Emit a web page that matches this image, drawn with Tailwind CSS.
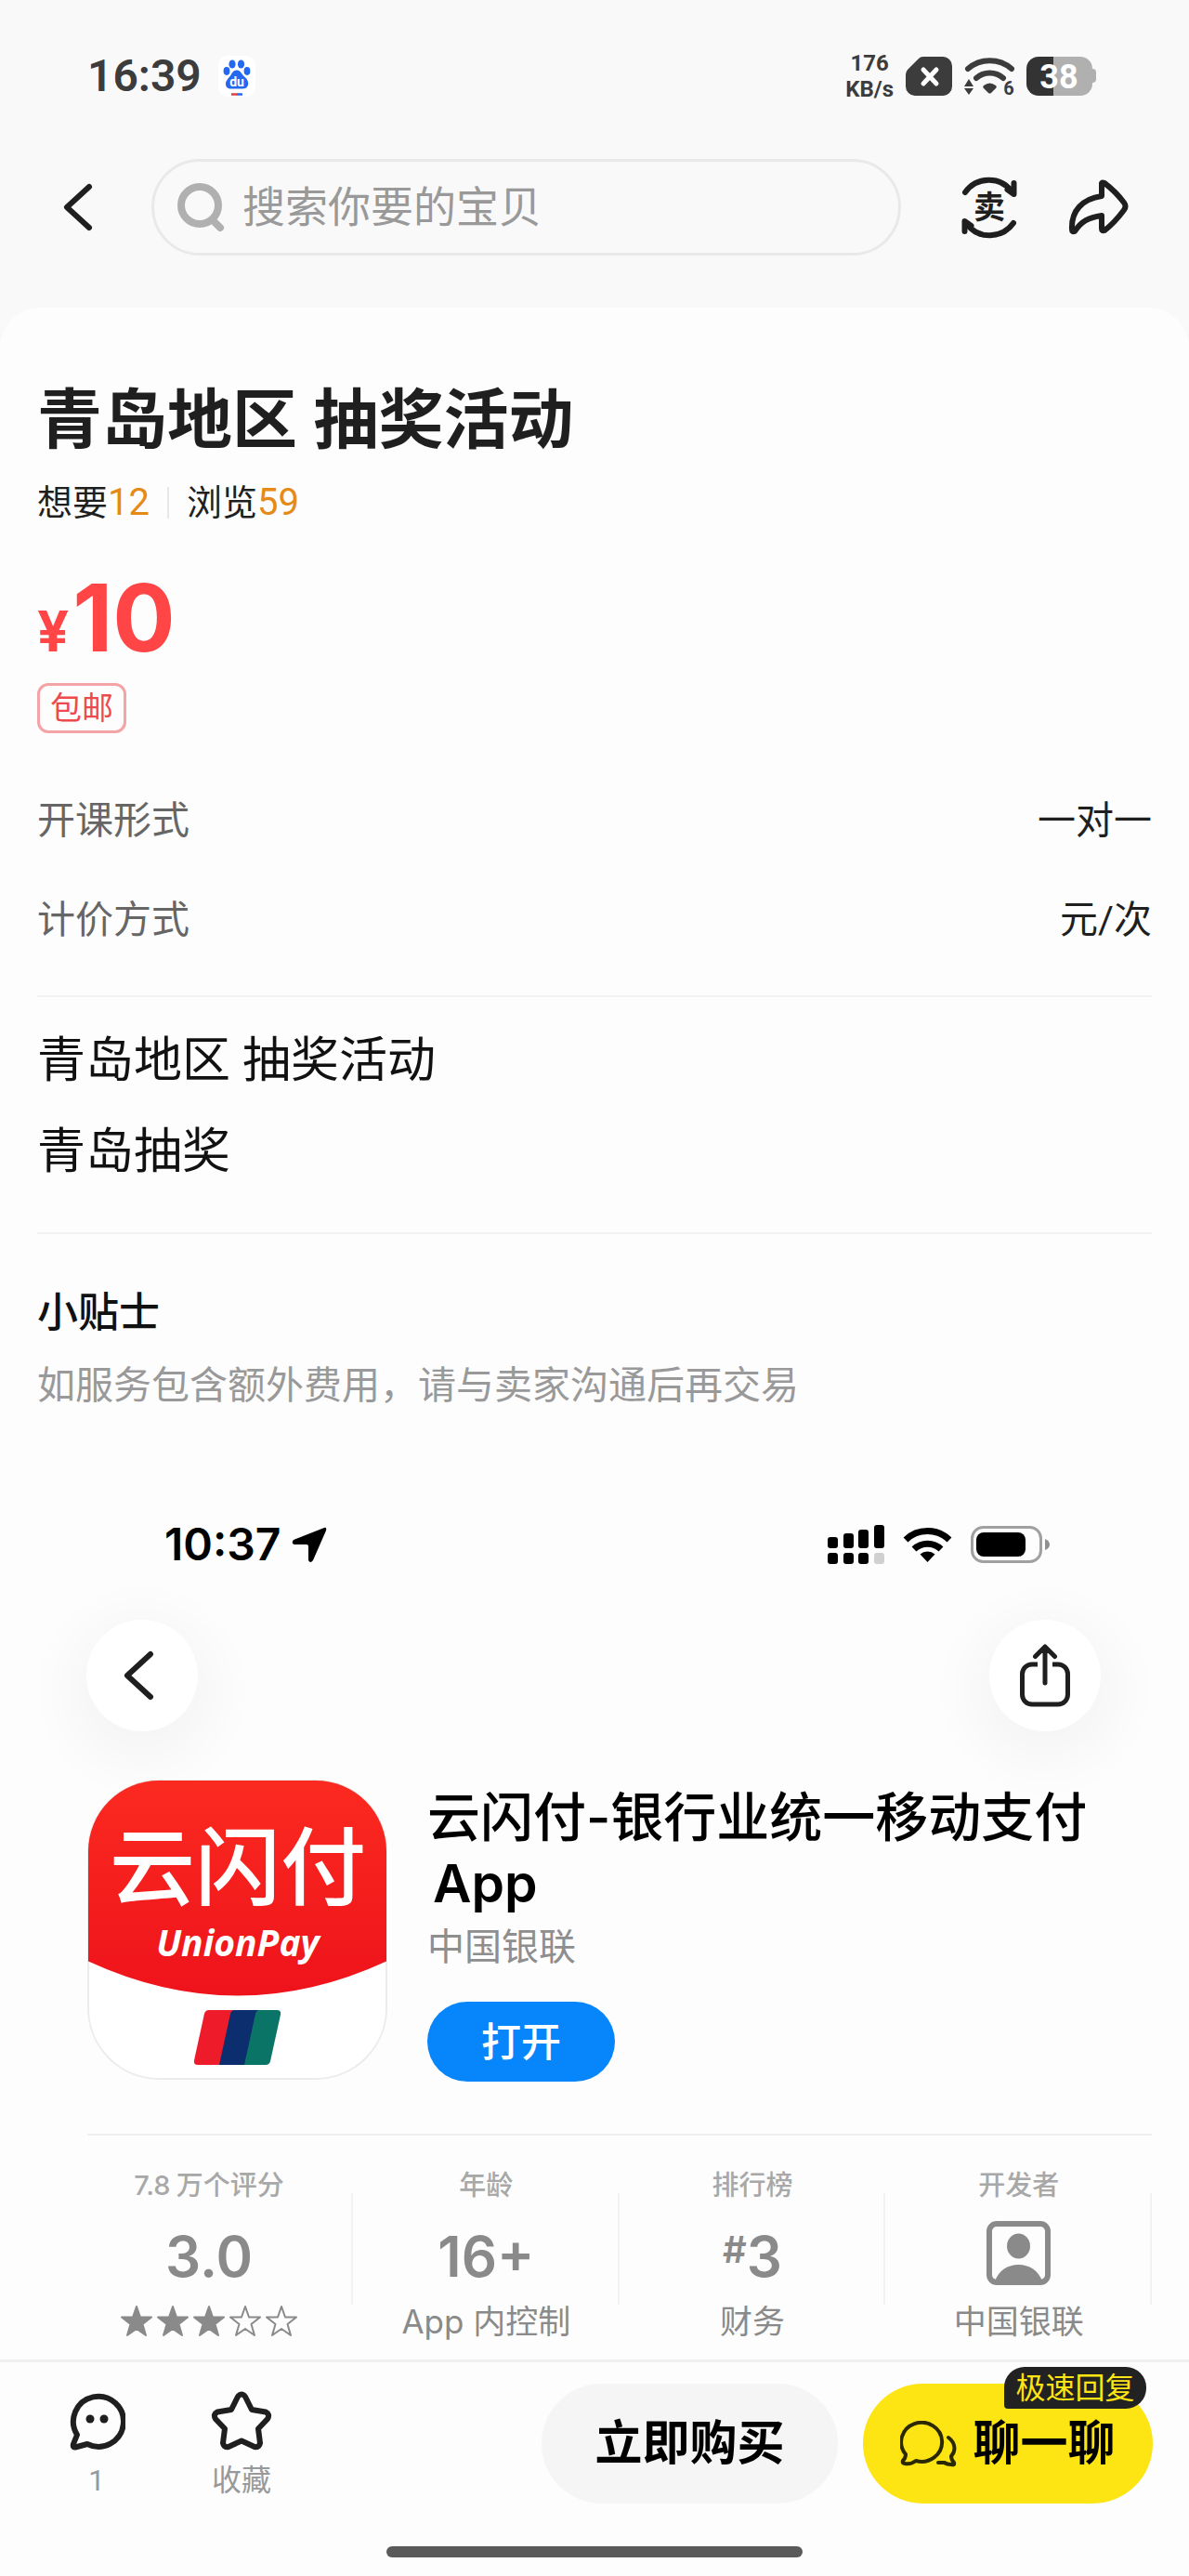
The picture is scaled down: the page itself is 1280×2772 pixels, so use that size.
<!DOCTYPE html>
<html lang="zh-CN">
<head>
    <meta charset="UTF-8">
    <meta name="viewport" content="width=device-width, initial-scale=1.0">
    <title>青岛地区 抽奖活动</title>
    <script src="https://cdn.jsdelivr.net/npm/@tailwindcss/browser@4"></script>
</head>
<body class="flex min-h-screen flex-col bg-[#f9f9f9] font-['Roboto','Noto_Sans_CJK_SC',sans-serif] text-[#1f1f1f]">

    <!-- Phone status bar -->
    <div class="flex items-center justify-between pt-14 pr-[100px] pl-[94px] text-[#3c3c3c]">
        <div class="flex h-[52px] items-center gap-[18px]">
            <span class="text-5xl leading-[52px] font-semibold">16:39</span>
            <svg class="h-11 w-10" viewBox="0 0 40 44">
                <rect width="40" height="44" rx="10" fill="#fff"/>
                <g fill="#2468f2">
                    <ellipse cx="15" cy="9" rx="3.6" ry="4.6"/>
                    <ellipse cx="24.500" cy="9" rx="3.600" ry="4.600"/>
                    <ellipse cx="9" cy="16.500" rx="3.400" ry="4.400"/>
                    <ellipse cx="31" cy="16.500" rx="3.400" ry="4.400"/>
                    <path d="M20 15.500c4 0 5 4 8 7 3 2.500 5 5.500 4 9-1 3-3 4-6 4H14c-4 0-6-2-6-5 0-4 3-6 5-9 2-3 3-6 7-6z"/>
                </g>
                <text x="20" y="33" text-anchor="middle" font-family="Roboto" font-weight="700" font-size="14" fill="#fff">du</text>
                <path d="M14 41.500h6" stroke="#e0403a" stroke-width="2.500"/>
                <path d="M20 41.500h6" stroke="#2468f2" stroke-width="2.500"/>
            </svg>
        </div>
        <div class="flex h-[52px] items-center gap-[13px]">
            <div class="text-center text-2xl leading-[28px] font-bold">
                <div>176</div>
                <div>KB/s</div>
            </div>
            <svg class="h-[42px] w-[50px]" viewBox="0 0 50 42">
                <path d="M19 0h21a10 10 0 0 1 10 10v22a10 10 0 0 1-10 10H10A10 10 0 0 1 0 32V20c0-3 1-5 3-7L13 3c2-2 3-3 6-3z" fill="#3c3c3c"/>
                <path d="M19 14l14 15M33 14L19 29" stroke="#fff" stroke-width="5" stroke-linecap="round"/>
            </svg>
            <svg class="h-[42px] w-[54px] overflow-visible" viewBox="0 0 54 42" fill="none">
                <path d="M4 13a36 36 0 0 1 47 0" stroke="#3c3c3c" stroke-width="6" stroke-linecap="round"/>
                <path d="M13 23a22 22 0 0 1 29 0" stroke="#3c3c3c" stroke-width="6" stroke-linecap="round"/>
                <path d="M21 31q6.500-5 13 0c1 1 1 2 0 3l-5 5q-1.500 1-3 0l-5-5c-1-1-1-2 0-3z" fill="#3c3c3c"/>
                <path d="M5 24l5 8H0zM5 41l5-7H0z" fill="#3c3c3c"/>
                <text x="48" y="41" text-anchor="middle" font-family="Roboto" font-weight="700" font-size="20" fill="#3c3c3c">6</text>
            </svg>
            <svg class="h-[42px] w-[75px]" viewBox="0 0 75 42">
                <rect x="60" y="13" width="15" height="15" rx="4" fill="#b0b0b0"/>
                <path d="M28 0h30a13 13 0 0 1 13 13v16a13 13 0 0 1-13 13H28z" fill="#b0b0b0"/>
                <path d="M29 0H13A13 13 0 0 0 0 13v16a13 13 0 0 0 13 13h16z" fill="#333"/>
                <text x="35" y="34" text-anchor="middle" font-family="Roboto" font-weight="700" font-size="36" fill="#fff">38</text>
            </svg>
        </div>
    </div>

    <!-- Search header -->
    <header class="flex items-center pt-[63px] pr-[65px] pb-14 pl-[66px]">
        <button type="button" aria-label="返回">
            <svg class="h-[56px] w-[36px]" viewBox="0 0 36 56" fill="none" stroke="#1f1f1f" stroke-width="6" stroke-linecap="round" stroke-linejoin="round">
                <path d="M30 6L6 28l24 22"/>
            </svg>
        </button>
        <label class="ml-[61px] flex h-[104px] flex-1 items-center gap-[18px] rounded-full border-3 border-[#e9e9e9] pl-[25px]">
            <svg class="h-[54px] w-[52px] shrink-0" viewBox="0 0 52 54" fill="none" stroke="#b0b0b0" stroke-width="8" stroke-linecap="round">
                <circle cx="24" cy="25" r="20"/>
                <path d="M39 42l7 7"/>
            </svg>
            <input type="text" aria-label="搜索" placeholder="搜索你要的宝贝" class="w-full min-w-0 bg-transparent text-[46px] leading-[60px] outline-none placeholder:text-[#999]">
        </label>
        <button type="button" aria-label="卖" class="ml-[64px]">
            <svg class="h-[68px] w-[62px]" viewBox="0 0 62 68" fill="none" stroke="#1f1f1f" stroke-width="6" stroke-linecap="round" stroke-linejoin="round">
                <path d="M5 18C17 1 43 0 55 17M57.500 8v12l-7-5"/>
                <path d="M57 51C45 68 19 69 7 52M4.500 60V49l7 5"/>
                <text x="31" y="46" text-anchor="middle" font-family="Noto Sans CJK SC" font-weight="700" font-size="34" fill="#1f1f1f" stroke="none">卖</text>
            </svg>
        </button>
        <button type="button" aria-label="分享" class="ml-[54px]">
            <svg class="h-[60px] w-[65px]" viewBox="0 0 65 60" fill="none" stroke="#1f1f1f" stroke-width="6" stroke-linecap="round" stroke-linejoin="round">
                <path d="M36 4Q37 3 39 4C47 10 54 17 60 25Q63 29 60 33C54 41 47 49 39 55Q36 56 36 53V39C22 41 14 45 7 56Q4 57 4 54C3 34 15 21 36 18z"/>
            </svg>
        </button>
    </header>

    <main class="flex-1 rounded-t-[44px] bg-[#fdfdfd] px-10">
        <h1 class="pt-[86px] text-[70px] leading-[72px] font-bold">青岛地区 抽奖活动</h1>

        <div class="mt-[32px] flex items-center text-[38px] leading-[40px]">
            <span>想要<span class="text-[40px] text-[#e68a17]">12</span></span>
            <span class="mx-[19px] h-[34px] w-[2px] bg-[#e8e8e8]"></span>
            <span>浏览<span class="text-[40px] text-[#e68a17]">59</span></span>
        </div>

        <!-- Price -->
        <div class="mt-[54px] flex items-baseline gap-1 font-['Inter',sans-serif] font-bold text-[#ff4545]">
            <span class="text-[60px] leading-[60px]">¥</span>
            <span class="text-[100px] leading-[100px]">10</span>
        </div>
        <div class="mt-[20px] flex h-[54px] w-fit items-center rounded-xl border-3 border-[#f4a3a6] px-[11px] text-[34px] leading-[40px] text-[#ee4a4d]">包邮</div>

        <!-- Service attributes -->
        <dl class="border-b-2 border-[#f2f2f2] pt-[66px] pb-[53px] text-[41px] leading-[56px]">
            <div class="flex justify-between">
                <dt class="text-[#666]">开课形式</dt>
                <dd>一对一</dd>
            </div>
            <div class="mt-[51px] flex justify-between">
                <dt class="text-[#666]">计价方式</dt>
                <dd>元/次</dd>
            </div>
        </dl>

        <div class="border-b-2 border-[#f2f2f2] pt-5 pb-[37px] text-[52px] leading-[98px] text-[#111]">
            <p>青岛地区 抽奖活动</p>
            <p>青岛抽奖</p>
        </div>

        <h2 class="pt-[57px] text-[44px] leading-[56px] font-medium text-[#111]">小贴士</h2>
        <p class="mt-[22px] text-[41px] leading-[56px] text-[#999]">如服务包含额外费用，请与卖家沟通后再交易</p>

        <!-- App store picture -->
        <section class="mt-[80px] overflow-hidden pt-[42px] font-['Inter','Noto_Sans_CJK_SC',sans-serif] text-black">
            <div class="flex h-[42px] items-center justify-between pr-[110px] pl-[137px]">
                <div class="flex items-center gap-3">
                    <span class="text-5xl leading-[42px] font-semibold">10:37</span>
                    <svg class="h-[38px] w-[38px]" viewBox="0 0 38 38">
                        <path d="M35 1q3-1 2 3L23 36q-3 4-5 0V21q0-2-2-2H3q-4-1-1-5z" fill="#000"/>
                    </svg>
                </div>
                <div class="flex items-center gap-5">
                    <svg class="h-[42px] w-[61px]" viewBox="0 0 61 42">
                        <rect y="13" width="11" height="12" rx="3"/>
                        <rect x="17" y="9" width="11" height="16" rx="3"/>
                        <rect x="33" y="5" width="11" height="20" rx="3"/>
                        <rect x="50" width="11" height="25" rx="3"/>
                        <rect y="30" width="11" height="12" rx="3"/>
                        <rect x="17" y="30" width="11" height="12" rx="3"/>
                        <rect x="33" y="30" width="11" height="12" rx="3"/>
                        <rect x="50" y="30" width="11" height="12" rx="3" fill="#d0d0d0"/>
                    </svg>
                    <svg class="h-[38px] w-[53px]" viewBox="0 0 53 38" fill="none" stroke="#000" stroke-width="7">
                        <path d="M3 14a34 34 0 0 1 47 0"/>
                        <path d="M12 24a21 21 0 0 1 29 0"/>
                        <path d="M18.500 29.500a12 12 0 0 1 16 0L26.500 38z" fill="#000" stroke="none"/>
                    </svg>
                    <svg class="h-[40px] w-[85px]" viewBox="0 0 85 40">
                        <rect x="1.500" y="1.500" width="74" height="37" rx="12" fill="none" stroke="#a0a0a0" stroke-width="3"/>
                        <rect x="6" y="7" width="53" height="26" rx="8"/>
                        <path d="M80 14q5 2 5 6t-5 6z" fill="#909090"/>
                    </svg>
                </div>
            </div>

            <div class="mt-[60px] flex justify-between pr-[55px] pl-[53px]">
                <button type="button" aria-label="返回" class="flex size-[120px] items-center justify-center rounded-full bg-white shadow-[0_16px_60px_20px_rgba(0,0,0,0.035)]">
                    <svg class="h-[56px] w-[40px]" viewBox="0 0 40 56" fill="none" stroke="#1f1f1f" stroke-width="6" stroke-linecap="round" stroke-linejoin="round">
                        <path d="M29 5L4 28l25 23"/>
                    </svg>
                </button>
                <button type="button" aria-label="共享" class="flex size-[120px] items-center justify-center rounded-full bg-white shadow-[0_16px_60px_20px_rgba(0,0,0,0.035)]">
                    <svg class="h-[68px] w-[54px]" viewBox="0 0 54 68" fill="none" stroke="#1f1f1f" stroke-width="5" stroke-linecap="round" stroke-linejoin="round">
                        <path d="M19 22h-6a10.500 10.500 0 0 0-10.500 10.500v22A10.500 10.500 0 0 0 13 65h28a10.500 10.500 0 0 0 10.500-10.500v-22A10.500 10.500 0 0 0 41 22h-6" stroke-linecap="butt"/>
                        <path d="M27 42V3M16.500 13.500L27 3l10.500 10.500"/>
                    </svg>
                </button>
            </div>

            <div class="mt-[52px] flex items-start gap-[43px] pl-[54px]">
                <svg class="size-[323px] shrink-0" viewBox="0 0 323 323" role="img" aria-label="云闪付">
                    <defs>
                        <clipPath id="tile"><rect x="1" y="1" width="321" height="321" rx="76"/></clipPath>
                        <linearGradient id="red" x1="0" y1="0" x2="0" y2="1">
                            <stop offset="0" stop-color="#fb2a20"/>
                            <stop offset="1" stop-color="#ee131b"/>
                        </linearGradient>
                    </defs>
                    <rect x="1" y="1" width="321" height="321" rx="76" fill="#fff" stroke="#ececec" stroke-width="2"/>
                    <path clip-path="url(#tile)" d="M0 0h323v195q-161 75-323 0z" fill="url(#red)"/>
                    <text x="162" y="128" text-anchor="middle" font-family="Noto Sans CJK SC" font-weight="500" font-size="92" fill="#fff">云闪付</text>
                    <text x="162" y="190" text-anchor="middle" font-family="Open Sans" font-weight="700" font-style="italic" font-size="39" fill="#fff">UnionPay</text>
                    <path d="M131 248h28l-14 59h-26q-5 0-4-5l11-50q1-4 5-4z" fill="#ee1c2a"/>
                    <path d="M159 248h26l-14 59h-29l12-55q1-4 5-4z" fill="#0d2e6e"/>
                    <path d="M186 248h18q5 0 4 5l-11 50q-1 4-5 4h-23l12-55q1-4 5-4z" fill="#0a7566"/>
                </svg>
                <div class="pt-[5px]">
                    <h3 class="text-[57px] leading-[71px] font-medium">云闪付-银行业统一移动支付<br><span class="pl-1.5 font-semibold">App</span></h3>
                    <p class="mt-[5px] text-[40px] leading-[56px] text-[#8e8e8e]">中国银联</p>
                    <button type="button" class="mt-[31px] h-[86px] rounded-full bg-[#0786fc] px-[58px] text-[43px] leading-[56px] font-medium text-white">打开</button>
                </div>
            </div>

            <!-- App facts -->
            <div class="mt-[56px] ml-[54px] border-t-2 border-[#f0f0f0]"></div>
            <div class="flex pt-[38px] pb-[20px] pl-[30px] text-center text-[#8a8a8a]">
                <div class="relative flex w-[310px] flex-col items-center">
                    <div class="text-[29px] leading-[32px] font-medium text-[#a8a8a8]"><span class="mr-1.5">7.8</span>万个评分</div>
                    <div class="mt-7 text-[60px] leading-[64px] font-semibold">3.0</div>
                    <svg class="mt-[18px] h-[40px] w-[190px]" viewBox="0 0 190 40" fill="none" stroke="#8a8a8a" stroke-width="2" stroke-linejoin="round" role="img" aria-label="3.0">
                        <defs>
                            <path id="star" d="M17 4l4 11.500h12l-9.500 7.500 3.500 12-10-7-10 7 3.500-12L1 15.500h12z"/>
                        </defs>
                        <use href="#star" fill="#8a8a8a"/>
                        <use href="#star" x="39" fill="#8a8a8a"/>
                        <use href="#star" x="78" fill="#8a8a8a"/>
                        <use href="#star" x="117"/>
                        <use href="#star" x="156"/>
                    </svg>
                    <div class="absolute top-6 right-0 h-[120px] w-[2px] bg-[#f2f2f2]"></div>
                </div>
                <div class="relative flex-1">
                    <div class="text-[29px] leading-[32px] font-medium text-[#a8a8a8]">年龄</div>
                    <div class="mt-7 text-[60px] leading-[64px] font-semibold">16+</div>
                    <div class="mt-[18px] text-[35px] leading-[40px]">App 内控制</div>
                    <div class="absolute top-6 right-0 h-[120px] w-[2px] bg-[#f2f2f2]"></div>
                </div>
                <div class="relative flex-1">
                    <div class="text-[29px] leading-[32px] font-medium text-[#a8a8a8]">排行榜</div>
                    <div class="mt-7 flex items-start justify-center text-[60px] leading-[64px] font-semibold"><span class="text-[40px] leading-[50px]">#</span>3</div>
                    <div class="mt-[18px] text-[35px] leading-[40px]">财务</div>
                    <div class="absolute top-6 right-0 h-[120px] w-[2px] bg-[#f2f2f2]"></div>
                </div>
                <div class="relative flex flex-1 flex-col items-center">
                    <div class="text-[29px] leading-[32px] font-medium text-[#a8a8a8]">开发者</div>
                    <div class="mt-5 flex h-[72px] items-center">
                        <svg class="size-[69px]" viewBox="0 0 69 69">
                            <rect x="3" y="3" width="63" height="63" rx="8" fill="none" stroke="#8a8a8a" stroke-width="6"/>
                            <ellipse cx="34.500" cy="27" rx="12.500" ry="13.500" fill="#8a8a8a"/>
                            <path d="M9 65c4-12 14-18 25.500-18S56 53 60 65z" fill="#8a8a8a"/>
                        </svg>
                    </div>
                    <div class="mt-[18px] text-[35px] leading-[40px]">中国银联</div>
                    <div class="absolute top-6 right-0 h-[120px] w-[2px] bg-[#f2f2f2]"></div>
                </div>
            </div>
        </section>
    </main>

    <!-- Bottom action bar -->
    <footer class="border-t-3 border-[#f0f0f0] bg-[#fdfdfd] pb-[20px]">
        <div class="flex items-start pt-[23px] pr-[39px] pl-[64px]">
            <button type="button" class="flex w-[80px] flex-col items-center pt-2 text-[32px] leading-[40px] text-[#999]">
                <svg class="h-[64px] w-[62px]" viewBox="0 0 62 64" fill="none" stroke="#1f1f1f" stroke-width="6" stroke-linecap="round" stroke-linejoin="round">
                    <path d="M10 47A27 27 0 1 1 21 57L8 60.500Q5 61 6 57z"/>
                    <circle cx="24" cy="30" r="4.500" fill="#1f1f1f" stroke="none"/>
                    <circle cx="39" cy="30" r="4.500" fill="#1f1f1f" stroke="none"/>
                </svg>
                <span class="mt-3">1</span>
            </button>
            <button type="button" class="ml-[76px] flex w-[80px] flex-col items-center pt-2 text-[32px] leading-[40px] text-[#999]">
                <svg class="h-[64px] w-[66px]" viewBox="0 0 66 64" fill="none" stroke="#1f1f1f" stroke-width="6" stroke-linecap="round" stroke-linejoin="round">
                    <path d="M29 6Q33 1 37 6L44 20 59 22.500Q64 25 61 30L51 40.500 53 56Q52 61 47 60L33 53.500 19 60Q14 61 13 56L15 40.500 5 30Q2 25 7 22.500L22 20z"/>
                </svg>
                <span class="mt-3">收藏</span>
            </button>
            <button type="button" class="ml-auto h-[129px] w-[319px] rounded-full bg-[#f5f5f5] text-[51px] leading-[60px] font-bold text-black">立即购买</button>
            <button type="button" class="relative ml-[27px] flex h-[129px] w-[312px] items-center justify-center gap-[17px] rounded-full bg-[#fde413] text-[51px] leading-[60px] font-bold text-black">
                <svg class="h-[50px] w-[61px]" viewBox="0 0 61 50" fill="none" stroke="#2b2900" stroke-width="4" stroke-linecap="round" stroke-linejoin="round">
                    <path d="M6 36A22 21 0 1 1 17 43Q12 47 5 46 2 46 3 43 6 40 6 36z"/>
                    <path d="M52 18C60 24 60 33 55 38Q55 42 58 45 59 48 55 47 50 47 48 45L41 45"/>
                </svg>
                聊一聊
                <span class="absolute -top-[18px] right-[7px] flex h-[45px] w-[153px] items-center justify-center rounded-[22px] rounded-bl-sm bg-[#222] text-[32px] leading-[40px] font-normal text-[#fde413]">极速回复</span>
            </button>
        </div>
        <div class="mx-auto mt-[46px] h-3 w-[448px] rounded-full bg-[#5a5a5a]"></div>
    </footer>
</body>
</html>
